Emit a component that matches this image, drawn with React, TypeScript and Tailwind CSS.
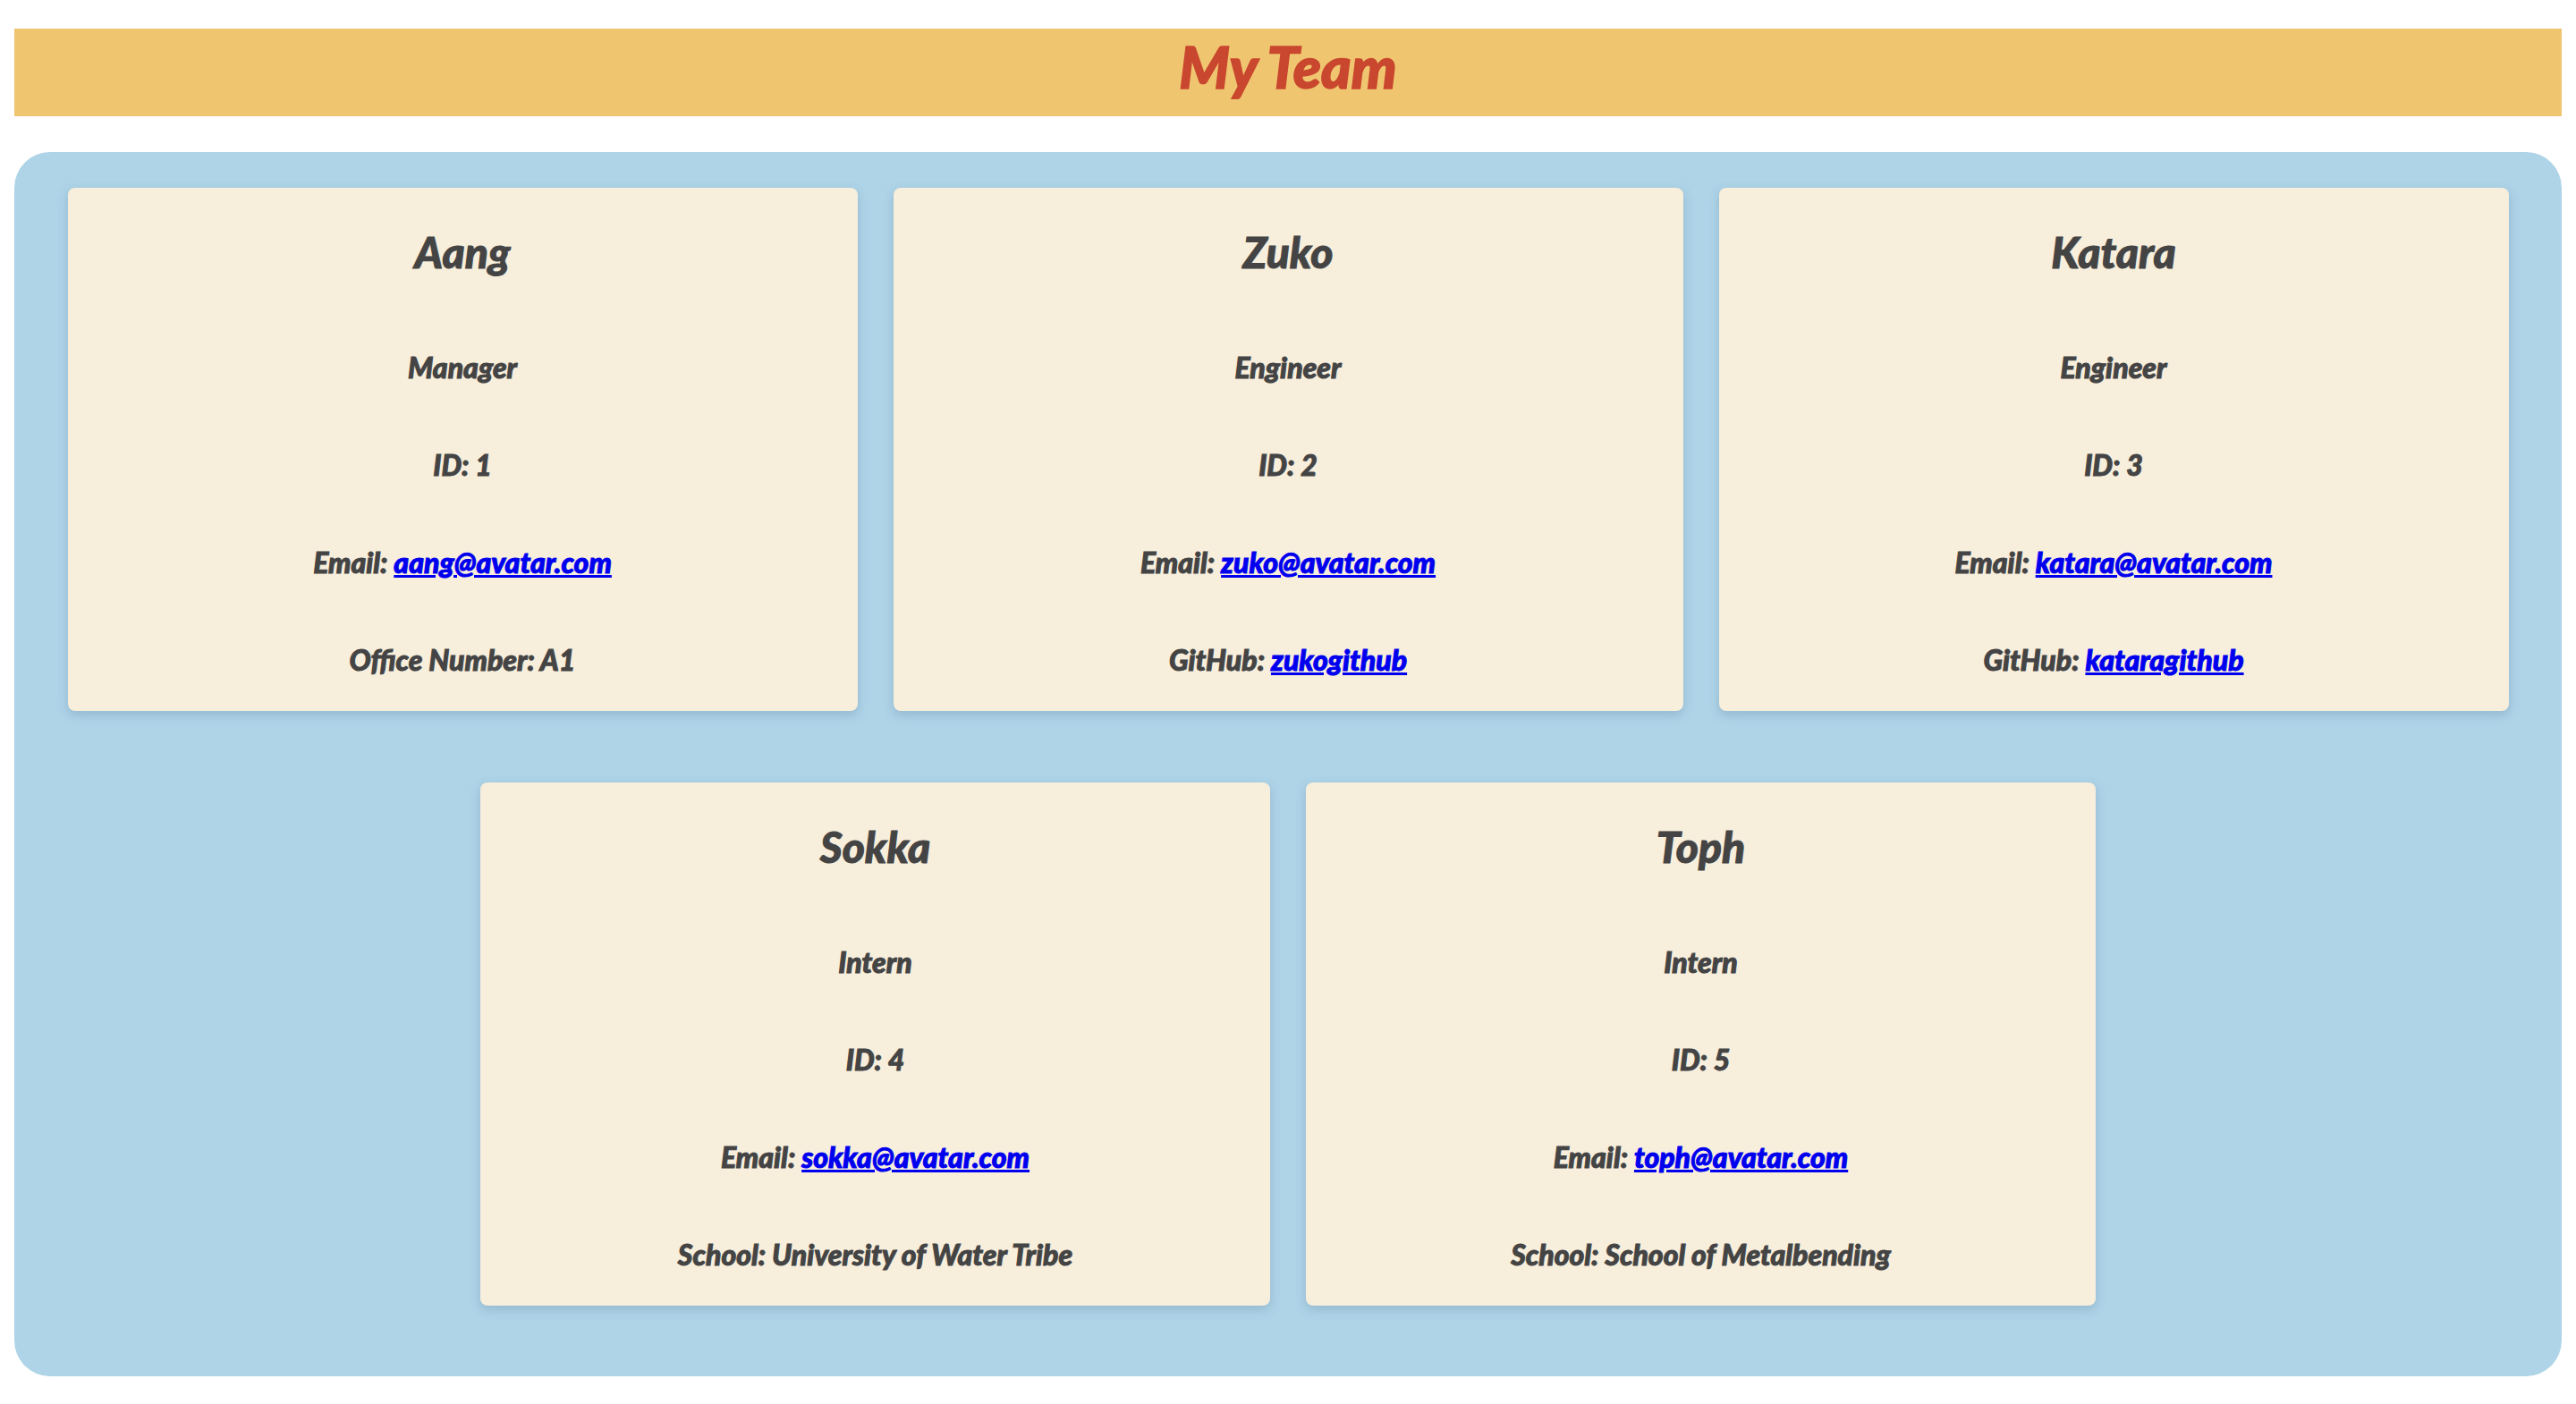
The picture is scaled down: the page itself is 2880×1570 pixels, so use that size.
const team = [
  { name: "Aang", role: "Manager", id: 1, email: "aang@avatar.com", extra: { label: "Office Number", value: "A1" } },
  { name: "Zuko", role: "Engineer", id: 2, email: "zuko@avatar.com", extra: { label: "GitHub", value: "zukogithub", link: true } },
  { name: "Katara", role: "Engineer", id: 3, email: "katara@avatar.com", extra: { label: "GitHub", value: "kataragithub", link: true } },
  { name: "Sokka", role: "Intern", id: 4, email: "sokka@avatar.com", extra: { label: "School", value: "University of Water Tribe" } },
  { name: "Toph", role: "Intern", id: 5, email: "toph@avatar.com", extra: { label: "School", value: "School of Metalbending" } },
];

type Member = (typeof team)[number];

export default function App() {
  return (
    <div className="min-h-screen bg-white px-4 pt-8 pb-8 font-['Lato','Liberation_Sans',sans-serif] italic">
      {/* HEADER */}
      <header className="h-[98px] bg-[#f0c570] text-center">
        <h1 className="text-[64px] leading-[86px] font-black text-[#c9472e] [-webkit-text-stroke:1.5px_currentcolor]">
          My Team
        </h1>
      </header>

      {/* TEAM */}
      <main className="mt-10 flex flex-wrap justify-center gap-x-10 gap-y-20 rounded-[40px] bg-[#afd4e8] pt-10 pb-[79px]">
        {team.map((m) => (
          <Card key={m.id} member={m} />
        ))}
      </main>
    </div>
  );
}

function Card({ member }: { member: Member }) {
  return (
    <div className="flex h-[585px] w-[883px] flex-col items-center rounded-lg bg-[#f7eedc] pt-[47px] text-[#444444] shadow-[0_4px_12px_rgba(60,100,130,0.25)] [-webkit-text-stroke:1px_currentcolor]">
      <h2 className="text-[48px] leading-[50px] font-black">{member.name}</h2>
      <div className="mt-[87px] flex flex-col items-center gap-[75px] text-[32px] leading-[34px] font-black">
        <p>{member.role}</p>
        <p>ID: {member.id}</p>
        <p>
          Email:{" "}
          <a href={`mailto:${member.email}`} className="text-[#0000ee] underline">
            {member.email}
          </a>
        </p>
        <p>
          {member.extra.label}:{" "}
          {"link" in member.extra && member.extra.link ? (
            <a href="#" className="text-[#0000ee] underline">
              {member.extra.value}
            </a>
          ) : (
            member.extra.value
          )}
        </p>
      </div>
    </div>
  );
}
